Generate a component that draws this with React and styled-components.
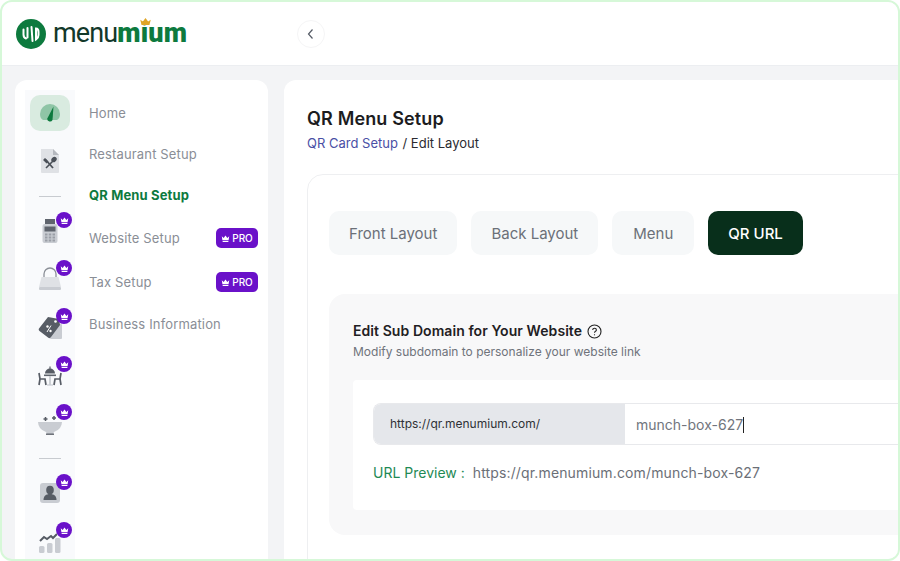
import React from "react";
import styled, { createGlobalStyle } from "styled-components";

const GlobalStyle = createGlobalStyle`
  * {
    margin: 0;
    padding: 0;
    box-sizing: border-box;
  }
  body {
    width: 900px;
    height: 561px;
    overflow: hidden;
    background: #fff;
    font-family: Inter, "Liberation Sans", sans-serif;
  }
`;

const Frame = styled.div`
  width: 900px;
  height: 561px;
  border: 2px solid #d6f8d8;
  border-radius: 12px;
  overflow: hidden;
  display: flex;
  flex-direction: column;
  background: #f3f4f6;
`;

const Header = styled.header`
  flex: none;
  height: 64px;
  display: flex;
  align-items: center;
  padding-left: 14px;
  background: #fff;
  border-bottom: 1px solid #eceef1;
`;

const Logo = styled.div`
  flex: none;
  width: 171px;
  display: flex;
  align-items: center;
  gap: 7px;
`;

const LogoMark = styled.svg`
  flex: none;
  width: 30px;
  height: 30px;
`;

const LogoWord = styled.div`
  position: relative;
  margin-top: -2px;
  white-space: nowrap;
  font-family: Roboto, "Liberation Sans", sans-serif;
  font-size: 27px;
  line-height: 32px;
  letter-spacing: -0.9px;
  color: #12382a;
`;

const LogoAccent = styled.span`
  color: #0d7a3e;
  font-weight: 900;
  letter-spacing: 0.2px;
`;

const LogoCrown = styled.svg`
  position: absolute;
  top: 1px;
  left: 87px;
  width: 11px;
  height: 7px;
`;

const Toggle = styled.button`
  margin-left: 110px;
  width: 28px;
  height: 28px;
  border: 1px solid #f5f5f6;
  border-radius: 50%;
  background: #fff;
  color: #555b66;
  display: flex;
  align-items: center;
  justify-content: center;
`;

const Body = styled.div`
  flex: 1;
  min-height: 0;
  display: flex;
  gap: 16px;
  padding: 14px 0 0 13px;
`;

const Sidebar = styled.aside`
  flex: none;
  width: 253px;
  height: 500px;
  display: flex;
  padding: 10px 10px 0 10px;
  background: #fff;
  border-radius: 12px 12px 0 0;
`;

const Rail = styled.div`
  flex: none;
  width: 50px;
  display: flex;
  flex-direction: column;
  align-items: center;
  padding-top: 5px;
  background: #f9fafc;
`;

const RailCell = styled.div`
  position: relative;
  flex: none;
  width: 40px;
  height: ${(p) => (p.$active ? "36px" : "48px")};
  margin-bottom: ${(p) => (p.$active ? "6px" : "0")};
  display: flex;
  align-items: center;
  justify-content: center;
  border-radius: 10px;
  background: ${(p) => (p.$active ? "#d9ebe0" : "transparent")};
`;

const RailIcon = styled.svg`
  width: 24px;
  height: 24px;
`;

const RailLine = styled.div`
  flex: none;
  width: 22px;
  height: 1px;
  margin: 10px 0;
  margin-top: 11px;
  background: #c8cbd0;
`;

const CrownBadge = styled.span`
  position: absolute;
  top: 5px;
  right: -2px;
  width: 16px;
  height: 16px;
  border-radius: 50%;
  background: #6a11c9;
  display: flex;
  align-items: center;
  justify-content: center;
`;

const CrownIcon = styled.svg`
  width: ${(p) => p.$size || 9}px;
  height: ${(p) => p.$size || 9}px;
  fill: #fff;
`;

const Nav = styled.nav`
  flex: 1;
  padding: 2px 0 0 14px;
  display: flex;
  flex-direction: column;
`;

const NavRow = styled.div`
  height: ${(p) => (p.$pro ? "44px" : "41px")};
  padding-top: ${(p) => (p.$pro ? "2px" : "0")};
  display: flex;
  align-items: center;
  justify-content: space-between;
  font-size: 13px;
  letter-spacing: 0.15px;
  font-weight: ${(p) => (p.$active ? 700 : 400)};
  color: ${(p) => (p.$active ? "#0d7a3e" : "#8a8e96")};
`;

const ProTag = styled.span`
  width: 42px;
  height: 20px;
  display: flex;
  align-items: center;
  justify-content: center;
  gap: 2px;
  border-radius: 5px;
  background: #6a11c9;
  color: #fff;
  font-size: 10px;
  font-weight: 500;
  letter-spacing: 0;
`;

const Main = styled.main`
  flex: none;
  width: 760px;
  height: 500px;
  padding: 28px 0 0 23px;
  background: #fff;
  border-radius: 12px 0 0 0;
`;

const Title = styled.h1`
  font-size: 18px;
  line-height: 22px;
  letter-spacing: 0.15px;
  font-weight: 600;
  color: #1c1c1e;
`;

const Crumbs = styled.div`
  margin-top: 3px;
  font-size: 13px;
  line-height: 20px;
  color: #2b2b30;
`;

const CrumbLink = styled.span`
  margin-right: 1px;
  color: #4a4fa5;
`;

const Card = styled.section`
  margin-top: 21px;
  height: 420px;
  padding: 36px 0 0 21px;
  border: 1px solid #eeeff1;
  border-radius: 16px 0 0 0;
`;

const Tabs = styled.div`
  display: flex;
  gap: 14px;
`;

const Tab = styled.div`
  height: 44px;
  padding: 0 ${(p) => p.$pad}px;
  display: flex;
  align-items: center;
  border-radius: 10px;
  font-size: 15px;
  font-weight: ${(p) => (p.$active ? 500 : 400)};
  background: ${(p) => (p.$active ? "#082f1b" : "#f6f8f9")};
  color: ${(p) => (p.$active ? "#fff" : "#6b7078")};
`;

const Panel = styled.div`
  margin-top: 39px;
  height: 241px;
  padding: 28px 0 0 24px;
  background: #f8f8f9;
  border-radius: 16px 0 0 16px;
`;

const PanelTitle = styled.h2`
  display: flex;
  align-items: center;
  gap: 5px;
  font-size: 14px;
  line-height: 18px;
  letter-spacing: 0.07px;
  font-weight: 600;
  color: #1f2023;
`;

const PanelHint = styled.p`
  margin-top: 4px;
  font-size: 12px;
  line-height: 16px;
  color: #6f737b;
`;

const UrlBox = styled.div`
  margin-top: 20px;
  height: 130px;
  padding: 23px 0 0 20px;
  background: #fff;
  border-radius: 4px 0 0 4px;
`;

const UrlRow = styled.div`
  height: 42px;
  display: flex;
  border: 1px solid #e8e9ec;
  border-right: 0;
  border-radius: 8px 0 0 8px;
  overflow: hidden;
`;

const UrlPrefix = styled.div`
  flex: none;
  width: 251px;
  padding: 0 0 2px 16px;
  display: flex;
  align-items: center;
  background: #e5e7eb;
  font-size: 12px;
  color: #2f3136;
`;

const UrlInput = styled.div`
  flex: 1;
  padding: 1px 0 0 11px;
  display: flex;
  align-items: center;
  font-size: 14px;
  color: #71757d;
`;

const Caret = styled.span`
  width: 1px;
  height: 16px;
  background: #222;
`;

const Preview = styled.div`
  margin-top: 19px;
  display: flex;
  gap: 8px;
  font-size: 14px;
  line-height: 18px;
  color: #6b6f77;
`;

const PreviewLabel = styled.span`
  color: #1f8a55;
`;

const PreviewUrl = styled.span`
  letter-spacing: 0.14px;
`;

const LIGHT = "#c9ccd2";
const DARK = "#5f646d";

const Crown = ({ size }) => (
  <CrownIcon $size={size} viewBox="0 0 12 12">
    <path d="M1 3l2.6 2.4L6 2l2.4 3.4L11 3l-.9 5.2H1.9z" />
    <rect x="2" y="9.2" width="8" height="1.4" rx=".5" />
  </CrownIcon>
);

const icons = {
  gauge: (
    <>
      <path d="M2 13a10 10 0 1 1 20 0c0 3-1 5-3 6H5c-2-1-3-3-3-6z" fill="#8fc5a6" />
      <path d="M15.500 5.500L14.500 19a2.800 2.800 0 0 1-5.300-1.300z" fill="#0d7a3e" />
    </>
  ),
  doc: (
    <>
      <path d="M3 0h12l6 6v17a1 1 0 0 1-1 1H4a1 1 0 0 1-1-1z" fill="#dfe1e5" />
      <path d="M15 0l6 6h-6z" fill="#b5b8be" />
      <path d="M7 10l8 9" stroke="#4b5058" strokeWidth="1.8" />
      <path d="M6 10l3.500 3.500" stroke="#4b5058" strokeWidth="2.600" />
      <path d="M8 19l7-7" stroke="#4b5058" strokeWidth="1.600" />
      <ellipse cx="16" cy="10.500" rx="2.300" ry="3" transform="rotate(45 16 10.500)" fill="#4b5058" />
    </>
  ),
  pos: (
    <>
      <rect x="7" y="0" width="10" height="6" fill={DARK} />
      <rect x="4.500" y="5" width="15" height="19" rx="2" fill={LIGHT} />
      <rect x="6.500" y="7.500" width="11" height="5" fill={DARK} />
      <path d="M7 15.500h2.500M10.750 15.500h2.500M14.500 15.500h2.500M7 18.500h2.500M10.750 18.500h2.500M14.500 18.500h2.500M7 21.500h2.500M10.750 21.500h2.500M14.500 21.500h2.500" stroke="#9a9ea6" strokeWidth="1.800" />
    </>
  ),
  bag: (
    <>
      <path d="M6 11V7a6 6 0 0 1 12 0v4" fill="none" stroke="#8b8f97" strokeWidth="1.300" />
      <path d="M3.500 10h17L23 20H1z" fill="#dfe1e5" />
      <rect x="1" y="20" width="22" height="3" rx="1" fill={LIGHT} />
    </>
  ),
  tag: (
    <>
      <rect x="12" y="9" width="12" height="15" rx="1" fill={LIGHT} />
      <path d="M10 2l11 2 1 6-9 12a2 2 0 0 1-3 .500L1.500 16a2 2 0 0 1-.500-2.500z" fill="#575c65" />
      <circle cx="17.500" cy="6.500" r="1.300" fill="#fff" />
      <path d="M13 10.500l-4 6.500" stroke="#fff" strokeWidth="1" />
      <circle cx="9.500" cy="11.500" r="1.200" fill="#fff" />
      <circle cx="12.500" cy="16" r="1.200" fill="#fff" />
    </>
  ),
  table: (
    <>
      <path d="M7 10.500a5 5 0 0 1 10 0z" fill="#575c65" />
      <rect x="11.400" y="3.500" width="1.200" height="3" fill="#575c65" />
      <rect x="6" y="11.500" width="12" height="1.600" fill={DARK} />
      <rect x="11.100" y="13" width="1.800" height="9" fill={LIGHT} />
      <path d="M9 22h6" stroke={LIGHT} strokeWidth="1.200" />
      <path d="M1 10l1 6h5l1 6M2 16l-1 6" stroke="#575c65" strokeWidth="1.700" fill="none" />
      <path d="M23 10l-1 6h-5l-1 6M22 16l1 6" stroke="#575c65" strokeWidth="1.700" fill="none" />
    </>
  ),
  bowl: (
    <>
      <path d="M0 11h24a12 11 0 0 1-8 10l-1 2H9l-1-2a12 11 0 0 1-8-10z" fill={LIGHT} />
      <path d="M7.500 6v4M5.500 8h4M16 5v4M14 7h4" stroke="#575c65" strokeWidth="1.500" />
      <path d="M8 23.200h8" stroke={DARK} strokeWidth="1.400" />
    </>
  ),
  person: (
    <>
      <rect x="2" y="2" width="20" height="20" rx="3" fill={LIGHT} />
      <ellipse cx="12" cy="9" rx="3.800" ry="4.300" fill="#575c65" />
      <path d="M5.500 19c0-4 2.500-6 6.500-6s6.500 2 6.500 6z" fill="#575c65" />
    </>
  ),
  chart: (
    <>
      <rect x="1" y="17" width="5.500" height="7" rx="1.500" fill={LIGHT} />
      <rect x="9" y="14" width="5.500" height="10" rx="1.500" fill={LIGHT} />
      <rect x="17" y="9" width="5.500" height="15" rx="1.500" fill={LIGHT} />
      <path d="M2 12l4-4 3 2 4-3 2 2 4-4" fill="none" stroke="#575c65" strokeWidth="2" />
    </>
  ),
};

const RailItem = ({ name, active, locked = true }) => (
  <RailCell $active={active}>
    <RailIcon viewBox="0 0 24 24">{icons[name]}</RailIcon>
    {locked && (
      <CrownBadge>
        <Crown />
      </CrownBadge>
    )}
  </RailCell>
);

const App = () => {
  return (
    <>
      <GlobalStyle />
      <Frame>
        <Header>
          <Logo>
            <LogoMark viewBox="0 0 30 30">
              <circle cx="15" cy="15" r="15" fill="#0d7a3e" />
              <path
                d="M7.500 10.500v5c0 2 1 3.500 2.500 4M11.500 9v9.500M15.500 8l1 14M20 9.500c2 0 2.500 1.500 2.500 3.500v3c0 2.500-1 3.500-2.500 4.500z"
                fill="none"
                stroke="#fff"
                strokeWidth="2"
                strokeLinecap="round"
              />
            </LogoMark>
            <LogoWord>
              menu<LogoAccent>mium</LogoAccent>
              <LogoCrown viewBox="0 0 12 8">
                <path d="M0 2l3 2 3-4 3 4 3-2-1.500 6h-9z" fill="#e0a526" />
              </LogoCrown>
            </LogoWord>
          </Logo>
          <Toggle>
            <svg width="12" height="12" viewBox="0 0 12 12" fill="none" stroke="currentColor" strokeWidth="1.2">
              <path d="M7.500 1.500L3.500 6l4 4.500" />
            </svg>
          </Toggle>
        </Header>
        <Body>
          <Sidebar>
            <Rail>
              <RailItem name="gauge" active locked={false} />
              <RailItem name="doc" locked={false} />
              <RailLine />
              <RailItem name="pos" />
              <RailItem name="bag" />
              <RailItem name="tag" />
              <RailItem name="table" />
              <RailItem name="bowl" />
              <RailLine />
              <RailItem name="person" />
              <RailItem name="chart" />
            </Rail>
            <Nav>
              <NavRow>Home</NavRow>
              <NavRow>Restaurant Setup</NavRow>
              <NavRow $active>QR Menu Setup</NavRow>
              <NavRow $pro>
                Website Setup
                <ProTag>
                  <Crown size={9} />
                  PRO
                </ProTag>
              </NavRow>
              <NavRow $pro>
                Tax Setup
                <ProTag>
                  <Crown size={9} />
                  PRO
                </ProTag>
              </NavRow>
              <NavRow>Business Information</NavRow>
            </Nav>
          </Sidebar>
          <Main>
            <Title>QR Menu Setup</Title>
            <Crumbs>
              <CrumbLink>QR Card Setup</CrumbLink> / Edit Layout
            </Crumbs>
            <Card>
              <Tabs>
                <Tab $pad={20}>Front Layout</Tab>
                <Tab $pad={20}>Back Layout</Tab>
                <Tab $pad={21}>Menu</Tab>
                <Tab $pad={20} $active>
                  QR URL
                </Tab>
              </Tabs>
              <Panel>
                <PanelTitle>
                  Edit Sub Domain for Your Website
                  <svg width="15" height="15" viewBox="0 0 15 15" fill="none" stroke="#222" strokeWidth="1.1">
                    <circle cx="7.500" cy="7.500" r="6.500" />
                    <path d="M5.700 6c0-2.300 3.700-2.300 3.700 0 0 1.300-1.900 1.300-1.900 2.700" />
                    <path d="M7.500 10.300v1" />
                  </svg>
                </PanelTitle>
                <PanelHint>Modify subdomain to personalize your website link</PanelHint>
                <UrlBox>
                  <UrlRow>
                    <UrlPrefix>https://qr.menumium.com/</UrlPrefix>
                    <UrlInput>
                      munch-box-627
                      <Caret />
                    </UrlInput>
                  </UrlRow>
                  <Preview>
                    <PreviewLabel>URL Preview :</PreviewLabel>
                    <PreviewUrl>https://qr.menumium.com/munch-box-627</PreviewUrl>
                  </Preview>
                </UrlBox>
              </Panel>
            </Card>
          </Main>
        </Body>
      </Frame>
    </>
  );
};

export default App;
